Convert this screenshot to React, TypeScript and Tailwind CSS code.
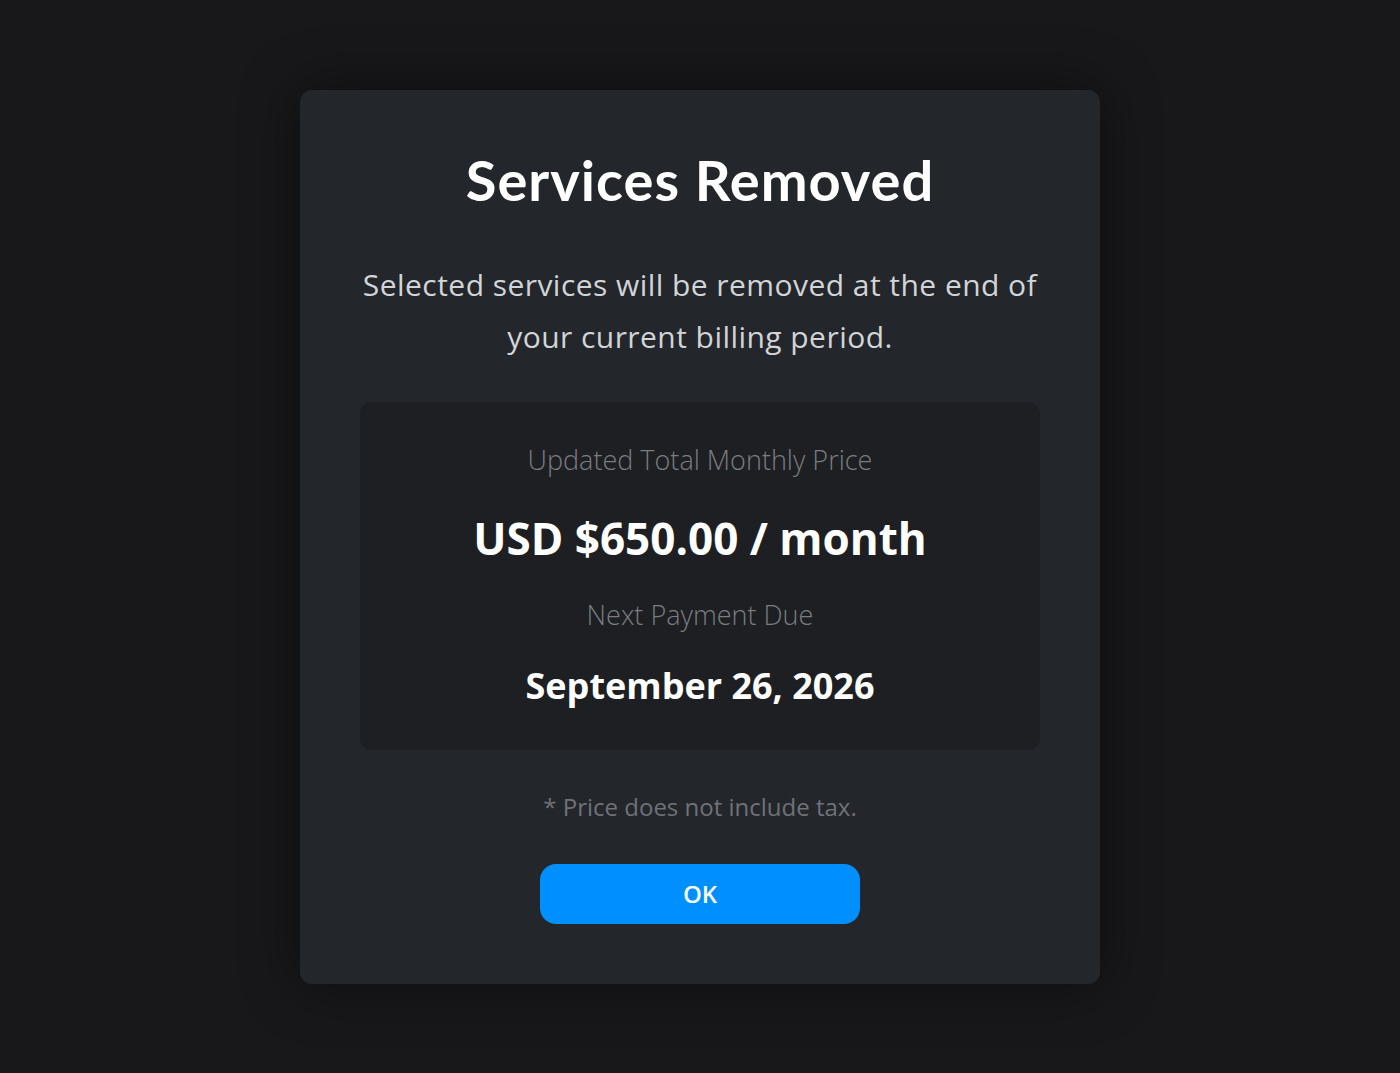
export default function App() {
  return (
    <div className="flex min-h-screen items-center justify-center bg-[#18181a] font-['Open_Sans',sans-serif]">
      <div className="flex w-[800px] flex-col items-center rounded-[12px] bg-[#23262b] px-[60px] pt-[60px] pb-[60px] text-center shadow-[0_0_60px_rgba(0,0,0,0.45)]">
        <h1 className="font-['Lato',sans-serif] text-[56px] leading-[60px] font-bold tracking-[1px] text-white">
          Services Removed
        </h1>
        <p className="mt-[49px] text-[30px] leading-[52px] tracking-[0.45px] text-[#d2d4d7]">
          Selected services will be removed at the end of
          <br />
          your current billing period.
        </p>

        <div className="mt-[39px] flex w-full flex-col items-center rounded-[12px] bg-[#1e1f23] pt-[40px] pb-[40px]">
          <div className="text-[27px] leading-[36px] font-light text-[#7a7c80]">
            Updated Total Monthly Price
          </div>
          <div className="mt-[32px] text-[44px] leading-[56px] font-bold text-white">
            USD $650.00 / month
          </div>
          <div className="mt-[31px] text-[27px] leading-[36px] font-light text-[#7a7c80]">
            Next Payment Due
          </div>
          <div className="mt-[29px] text-[36px] leading-[48px] font-bold text-white">
            September 26, 2026
          </div>
        </div>

        <p className="mt-[41px] text-[24px] leading-[32px] text-[#6f7277]">
          * Price does not include tax.
        </p>

        <button
          type="button"
          className="mt-[41px] flex h-[60px] w-[320px] items-center justify-center rounded-[16px] bg-[#008ffe] text-[24px] font-semibold text-white"
        >
          OK
        </button>
      </div>
    </div>
  );
}
